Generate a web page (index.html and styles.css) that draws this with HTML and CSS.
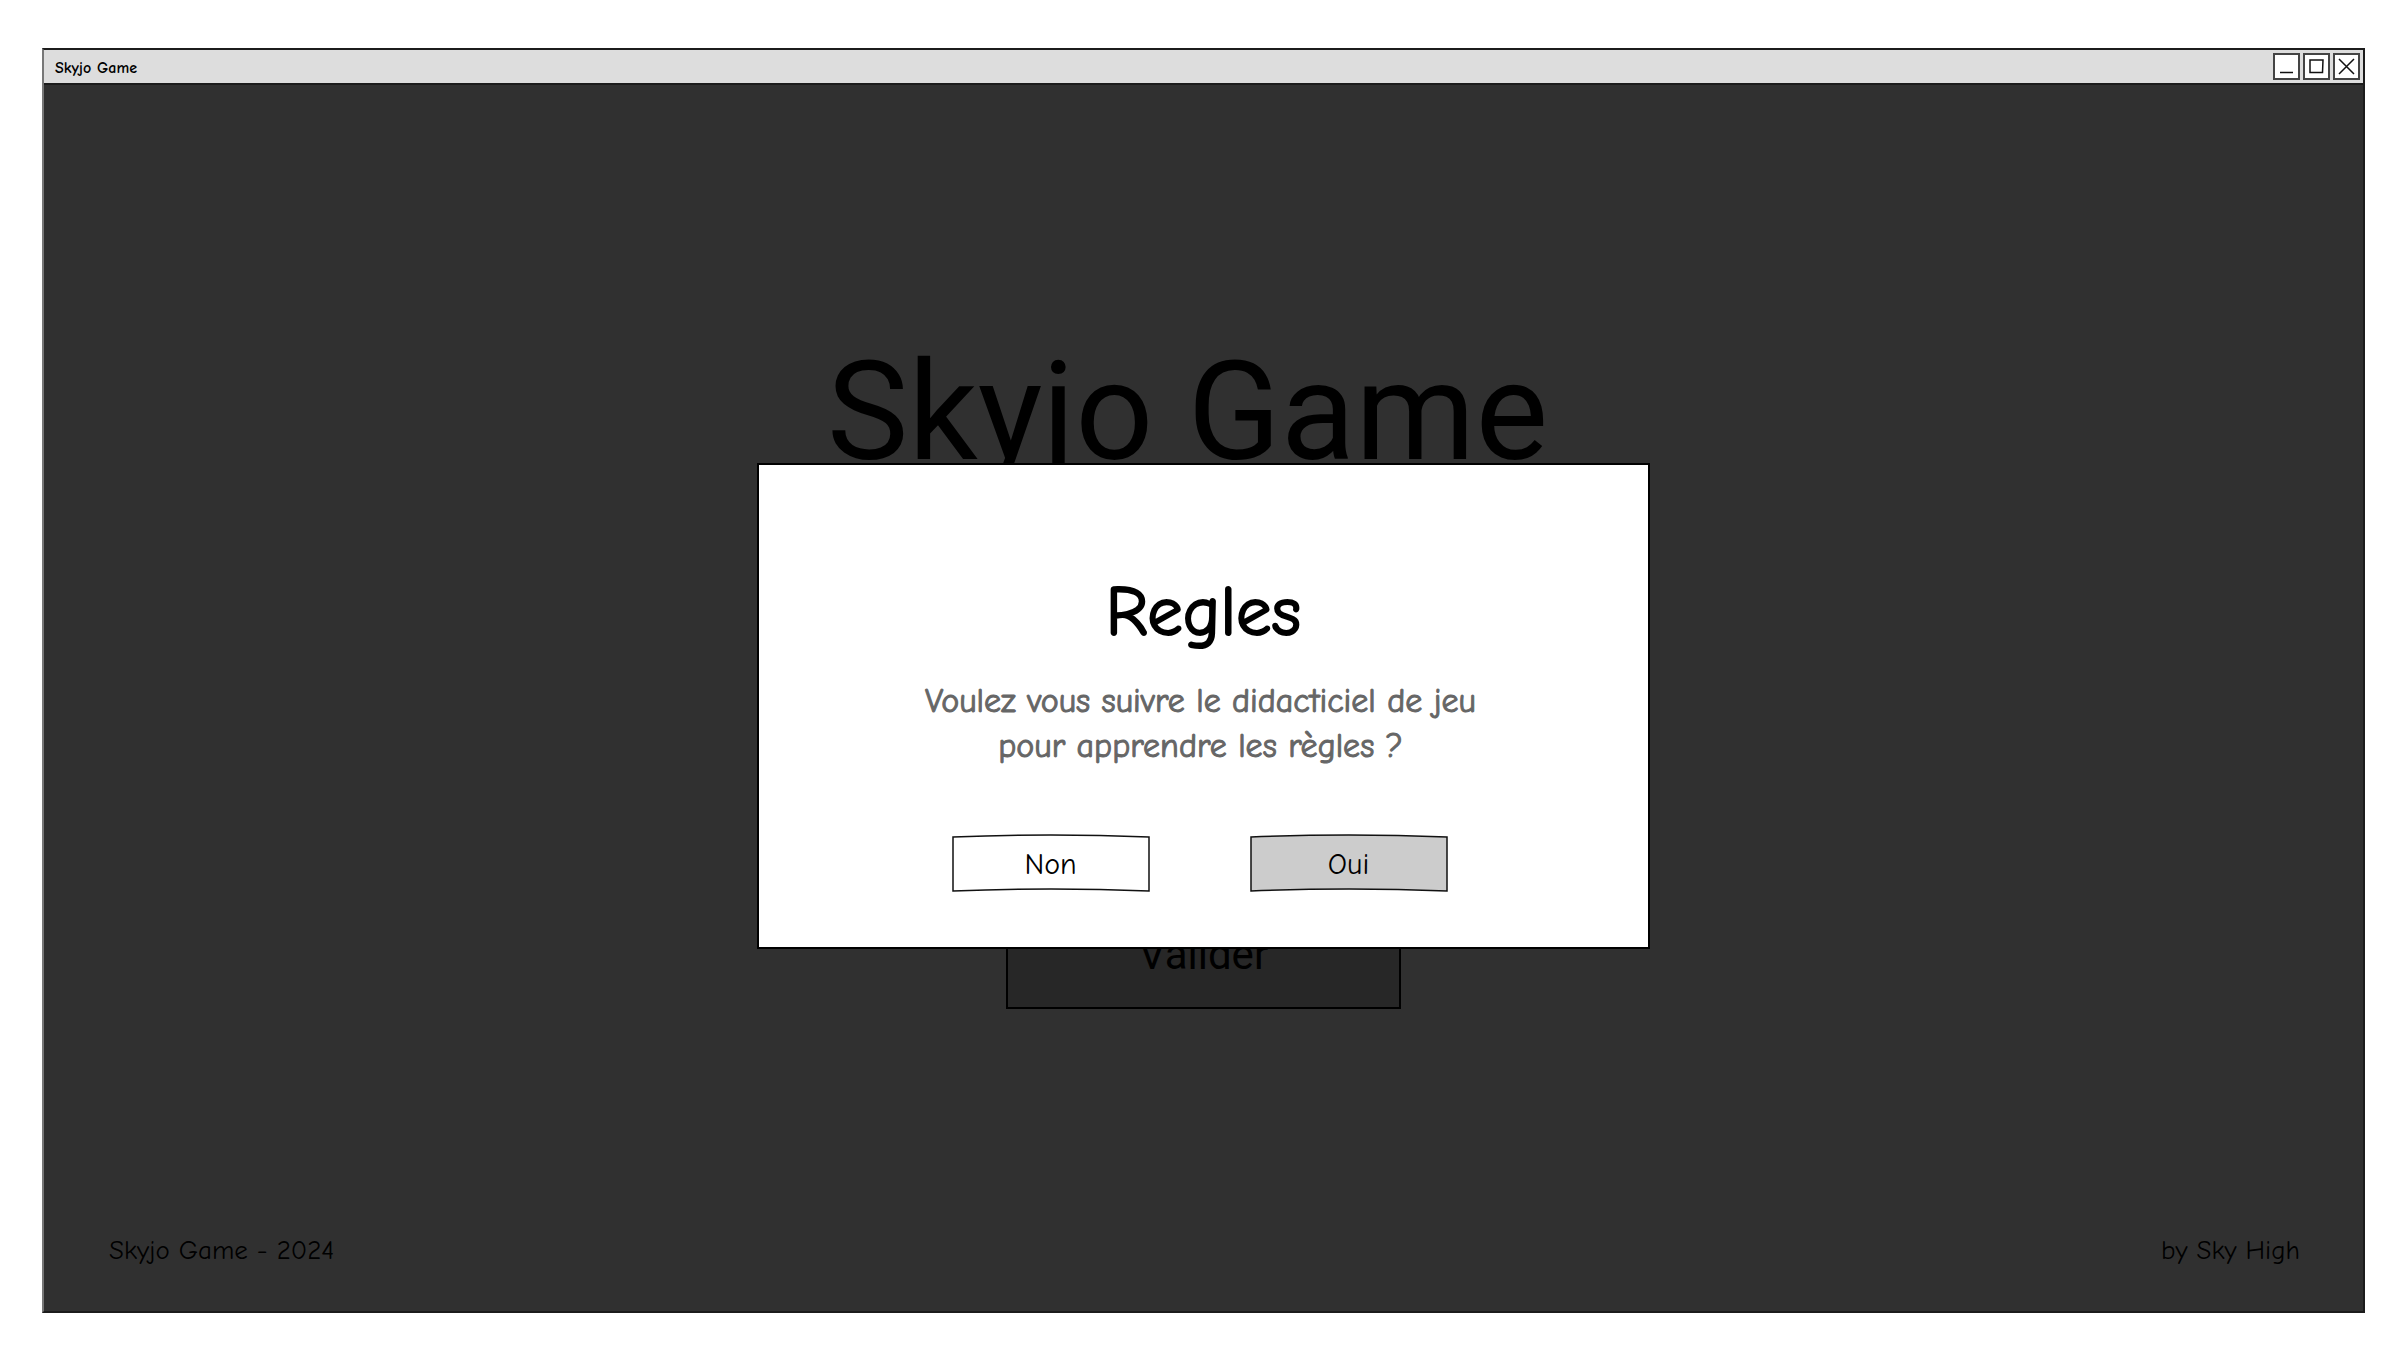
FILE: index.html
```html
<!DOCTYPE html>
<html lang="fr">
<head>
  <meta charset="utf-8">
  <meta name="viewport" content="width=device-width, initial-scale=1">
  <title>Skyjo Game</title>
  <link rel="stylesheet" href="styles.css">
</head>
<body>
  <div class="window">
    <header class="titlebar">
      <span class="titlebar-name">Skyjo Game</span>
      <div class="controls">
        <button class="control" type="button" aria-label="Réduire">
          <svg viewBox="2 2 23 23"><path d="M7 19.500H20"/></svg>
        </button>
        <button class="control" type="button" aria-label="Agrandir">
          <svg viewBox="2 2 23 23"><path d="M7 7H20L19.500 19.500H7Z"/></svg>
        </button>
        <button class="control" type="button" aria-label="Fermer">
          <svg viewBox="2 2 23 23"><path d="M6 6L21 21M21 6L6 21"/></svg>
        </button>
      </div>
    </header>
    <div class="stage">
      <main class="home">
        <h1 class="title">Skyjo Game</h1>
        <button class="validate" type="button">Valider</button>
      </main>
      <footer class="footer">
        <span>Skyjo Game - 2024</span>
        <span>by Sky High</span>
      </footer>
      <div class="overlay">
        <section class="dialog" role="dialog" aria-modal="true" aria-labelledby="dialog-title">
          <h2 class="dialog-title" id="dialog-title">Regles</h2>
          <p class="dialog-text">Voulez vous suivre le didacticiel de jeu<br>pour apprendre les règles ?</p>
          <div class="actions">
            <button class="choice" type="button">
              <svg class="outline" viewBox="0 0 198 58" preserveAspectRatio="none" aria-hidden="true"><path d="M1 3Q99 -1 197 3V57Q99 53 1 57Z"/></svg>
              <span class="label">Non</span>
            </button>
            <button class="choice choice-primary" type="button">
              <svg class="outline" viewBox="0 0 198 58" preserveAspectRatio="none" aria-hidden="true"><path d="M1 3Q99 -1 197 3V57Q99 53 1 57Z"/></svg>
              <span class="label">Oui</span>
            </button>
          </div>
        </section>
      </div>
    </div>
  </div>
</body>
</html>
```
FILE: styles.css
```css
* {
  box-sizing: border-box;
}

body {
  margin: 0;
  min-height: 100vh;
  padding: 48px 35px 37px 42px;
  display: flex;
  background: #fff;
  color: #000;
  font-family: "Comic Sans MS", "Comic Neue", "Open Sans", sans-serif;
  font-feature-settings: "liga" 0, "clig" 0, "dlig" 0, "calt" 0;
}

h1,
h2,
p {
  margin: 0;
  font-weight: 400;
}

button {
  font: inherit;
  color: inherit;
  padding: 0;
}

.window {
  flex: 1;
  display: flex;
  flex-direction: column;
  border: 2px solid #1c1c1c;
  border-left-color: #777;
}

.titlebar {
  display: flex;
  align-items: center;
  justify-content: space-between;
  height: 35px;
  padding: 0 3px 0 11px;
  background: #ddd;
  border-bottom: 2px solid #1c1c1c;
}

.titlebar-name {
  padding-top: 2px;
  font-size: 16px;
  font-weight: 600;
}

.controls {
  display: flex;
  gap: 3px;
}

.control {
  width: 27px;
  height: 27px;
  border: 2px solid #444;
  background: #fff;
  display: grid;
  place-items: center;
}

.control svg {
  width: 23px;
  height: 23px;
  fill: none;
  stroke: #111;
  stroke-width: 1.5;
}

.stage {
  position: relative;
  flex: 1;
  display: flex;
  flex-direction: column;
  background: #fff;
}

.home {
  flex: 1;
  display: flex;
  flex-direction: column;
  align-items: center;
  padding-top: 247px;
  font-family: Roboto, sans-serif;
}

.title {
  margin-right: 32px;
  font-size: 137px;
  line-height: 160px;
}

.validate {
  width: 395px;
  height: 110px;
  margin-top: 407px;
  border: 2px solid #000;
  background: #ccc;
  font-size: 42px;
}

.footer {
  display: flex;
  justify-content: space-between;
  padding: 0 63px 44px 65px;
  font-size: 27px;
  line-height: 32px;
}

.overlay {
  position: absolute;
  inset: 0;
  display: flex;
  align-items: center;
  justify-content: center;
  padding-top: 16px;
  background: rgba(0, 0, 0, 0.812);
}

.dialog {
  width: 893px;
  padding: 101px 0 55px;
  border: 2px solid #000;
  background: #fff;
  text-align: center;
}

.dialog-title {
  font-size: 71px;
  line-height: 92px;
  -webkit-text-stroke: 2px;
}

.dialog-text {
  margin-top: 21px;
  padding-right: 6px;
  color: #666;
  font-size: 34px;
  line-height: 45px;
  -webkit-text-stroke: 1px;
}

.actions {
  display: flex;
  justify-content: center;
  gap: 100px;
  margin: 65px 8px 0 0;
}

.choice {
  display: grid;
  width: 198px;
  height: 58px;
  border: 0;
  background: none;
  font-size: 30px;
}

.outline,
.label {
  grid-area: 1 / 1;
  place-self: center;
}

.label {
  padding-top: 2px;
}

.outline {
  width: 198px;
  height: 58px;
  fill: #fff;
  stroke: #111;
  stroke-width: 1.5;
}

.choice-primary .outline {
  fill: #ccc;
}
```
